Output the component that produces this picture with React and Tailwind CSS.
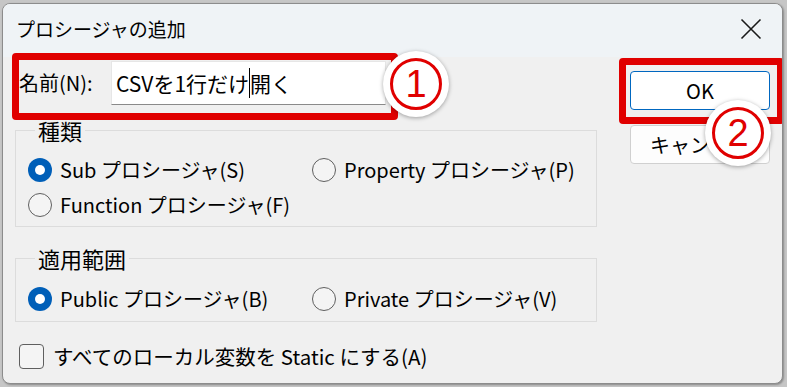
export default function App() {
  const Radio = ({ checked, label }) => (
    <div className="flex items-center h-[30px]">
      {checked ? (
        <span className="w-[24px] h-[24px] rounded-full bg-[#005fb8] flex items-center justify-center shrink-0">
          <span className="w-[10px] h-[10px] rounded-full bg-white" />
        </span>
      ) : (
        <span className="w-[24px] h-[24px] rounded-full border-[1.5px] border-[#5f5f5f] bg-[#f4f4f4] shrink-0" />
      )}
      <span className="ml-[8px] text-[20px] leading-[30px] whitespace-nowrap">{label}</span>
    </div>
  );

  const Marker = ({ n, className }) => (
    <div
      className={
        "absolute w-[66px] h-[66px] rounded-full bg-white shadow-[0_1px_4px_rgba(0,0,0,0.35)] flex items-center justify-center " +
        className
      }
    >
      <div className="w-[52px] h-[52px] rounded-full border-[3px] border-[#e00000] flex items-center justify-center">
        <span className="text-[#e00000] text-[38px] leading-none font-['Liberation_Sans',sans-serif] -mt-[1px]">{n}</span>
      </div>
    </div>
  );

  return (
    <div className="w-[787px] h-[387px] bg-[#c6c6c6] pt-[3px] pl-[2px] pr-[4px] pb-[3px] font-['Noto_Sans_CJK_JP',sans-serif] text-black overflow-hidden">
      <div className="relative w-full h-full rounded-[8px] border border-[#8c8c8c] bg-[#f0f0f0] overflow-hidden shadow-[1px_1px_2px_rgba(0,0,0,0.3)]">
        {/* title bar */}
        <div className="h-[53px] bg-[#eff3f6] flex items-center justify-between pl-[13px] pr-[20px]">
          <span className="text-[19px] leading-[30px] -mt-[3px]">プロシージャの追加</span>
          <svg width="22" height="22" viewBox="0 0 22 22" className="-mt-[3px]">
            <path d="M1.5 1.5 L20.5 20.5 M20.5 1.5 L1.5 20.5" stroke="#1a1a1a" strokeWidth="1.6" fill="none" />
          </svg>
        </div>

        {/* body */}
        <div className="flex">
          <div className="ml-[12px] w-[582px] flex flex-col">
            {/* name row */}
            <div className="flex items-center mt-[4px] h-[44px]">
              <span className="ml-[4px] text-[20px] leading-[30px] w-[92px] whitespace-nowrap">名前(N):</span>
              <div className="w-[275px] h-[44px] bg-white border border-[#e6e6e6] border-b-[#8a8a8a] flex items-center pl-[4px]">
                <span className="text-[21px] leading-[30px] whitespace-nowrap">CSVを1行だけ</span>
                <span className="w-0 h-[30px] border-l border-black" />
                <span className="text-[21px] leading-[30px] whitespace-nowrap">開く</span>
              </div>
            </div>

            {/* group 1 */}
            <fieldset className="mt-[14px] border border-[#dcdcdc] pl-[12px] pt-[14px] pb-[6px] min-w-0">
              <legend className="ml-[7px] px-[3px] text-[22px] leading-[22px]">種類</legend>
              <div className="grid grid-cols-[284px_1fr] gap-y-[5px]">
                <Radio checked label="Sub プロシージャ(S)" />
                <Radio label="Property プロシージャ(P)" />
                <Radio label="Function プロシージャ(F)" />
              </div>
            </fieldset>

            {/* group 2 */}
            <fieldset className="mt-[20px] border border-[#dcdcdc] pl-[12px] pt-[15px] pb-[7px] min-w-0">
              <legend className="ml-[7px] px-[3px] text-[22px] leading-[22px]">適用範囲</legend>
              <div className="grid grid-cols-[284px_1fr]">
                <Radio checked label="Public プロシージャ(B)" />
                <Radio label="Private プロシージャ(V)" />
              </div>
            </fieldset>

            {/* checkbox */}
            <div className="flex items-center h-[30px] mt-[19px] ml-[4px]">
              <span className="w-[25px] h-[25px] rounded-[4px] border-[1.5px] border-[#5f5f5f] bg-[#f4f4f4] shrink-0" />
              <span className="ml-[9px] text-[20.5px] leading-[30px] whitespace-nowrap">すべてのローカル変数を Static にする(A)</span>
            </div>
          </div>

          {/* buttons */}
          <div className="ml-[33px] w-[140px] flex flex-col">
            <button className="mt-[14px] h-[39px] rounded-[4px] border border-[#0067c0] bg-white text-[20px] leading-[30px]">OK</button>
            <button className="mt-[15px] h-[39px] rounded-[4px] border border-[#d0d0d0] bg-[#fdfdfd] text-[20px] leading-[30px]">キャンセル</button>
          </div>
        </div>

        {/* annotations */}
        <div className="absolute left-[9px] top-[49px] w-[386px] h-[67px] border-[7px] border-[#e00000] rounded-[4px]" />
        <div className="absolute left-[616px] top-[54px] w-[165px] h-[66px] border-[7px] border-[#e00000] rounded-[4px]" />
        <Marker n="1" className="left-[380px] top-[47px]" />
        <Marker n="2" className="left-[702px] top-[96px]" />
      </div>
    </div>
  );
}
